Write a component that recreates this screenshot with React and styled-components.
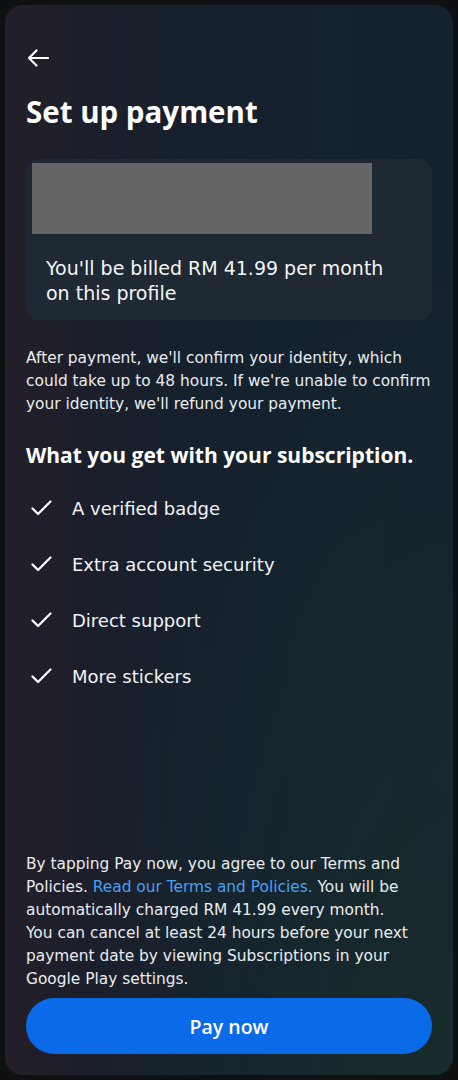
import styled, { createGlobalStyle } from "styled-components";

const GlobalStyle = createGlobalStyle`
  html, body {
    margin: 0;
    padding: 0;
    background-color: #0e1011;
  }
  * {
    box-sizing: border-box;
  }
`;

const Screen = styled.div`
  width: 458px;
  height: 1080px;
  padding: 5px;
  background-color: #0e1011;
  font-family: "DejaVu Sans", "Noto Sans", sans-serif;
  color: #f2f4f5;
`;

const Sheet = styled.div`
  height: 100%;
  border-radius: 18px;
  background:
    radial-gradient(ellipse at 100% 100%, rgba(24, 44, 44, 0.9) 0%, rgba(24, 44, 44, 0) 55%),
    linear-gradient(90deg, #241f28 0%, #1b1f2b 18%, #15212e 45%, #14222f 100%);
  display: flex;
  flex-direction: column;
  padding: 0 21px 21px;
`;

const BackButton = styled.button`
  align-self: flex-start;
  height: 18px;
  margin: 44px 0 0 1px;
  padding: 0;
  border: none;
  background: none;
  color: #fff;
  display: flex;
`;

const Title = styled.h1`
  margin: 28px 0 0;
  font-family: "Open Sans", sans-serif;
  font-size: 29.5px;
  line-height: 34px;
  font-weight: 700;
  color: #fff;
`;

const BillCard = styled.div`
  margin-top: 30px;
  border-radius: 13px;
  background-color: #1f2933;
  padding: 4px 6px 14px;
`;

const Redacted = styled.div`
  width: 340px;
  height: 71px;
  background-color: #656565;
`;

const BillText = styled.p`
  margin: 22px 0 0 14px;
  font-size: 19px;
  line-height: 25px;
  color: #f4f5f6;
`;

const Paragraph = styled.p`
  margin: ${(p) => p.$top || "27px"} 0 0;
  padding-right: ${(p) => p.$inset || "0"};
  font-size: 15.4px;
  line-height: 23px;
  color: #e9ecee;
`;

const Heading = styled.h2`
  margin: 25px 0 0;
  font-family: "Open Sans", sans-serif;
  font-size: 21px;
  line-height: 28px;
  font-weight: 700;
  color: #fff;
`;

const List = styled.ul`
  list-style: none;
  margin: 25px 0 0;
  padding: 0;
  display: flex;
  flex-direction: column;
  gap: 28px;
`;

const Item = styled.li`
  display: flex;
  align-items: center;
  height: 28px;
  font-size: 18px;
  color: #f2f4f5;
`;

const Check = styled.span`
  width: 46px;
  padding-left: 5px;
  display: flex;
`;

const Footer = styled.div`
  margin-top: auto;
`;

const Link = styled.span`
  color: #4a9ff5;
`;

const PayButton = styled.button`
  width: 100%;
  height: 56px;
  margin-top: 7px;
  border: none;
  border-radius: 28px;
  background-color: #0a6ae8;
  color: #fff;
  font-family: "Open Sans", sans-serif;
  font-size: 19.5px;
  font-weight: 600;
`;

const CheckIcon = () => (
  <svg width="21" height="16" viewBox="0 0 21 16" fill="none">
    <path d="M1.5 8.5 L7 14 L19.5 1.5" stroke="#fff" strokeWidth="2.2" strokeLinecap="round" strokeLinejoin="round" />
  </svg>
);

const benefits = [
  "A verified badge",
  "Extra account security",
  "Direct support",
  "More stickers",
];

export default function App() {
  return (
    <Screen>
      <GlobalStyle />
      <Sheet>
        <BackButton aria-label="Back">
          <svg width="22" height="18" viewBox="0 0 22 18" fill="none">
            <path d="M21 9 H2 M9.5 1.5 L2 9 L9.5 16.5" stroke="#fff" strokeWidth="2.2" strokeLinecap="round" strokeLinejoin="round" />
          </svg>
        </BackButton>
        <Title>Set up payment</Title>
        <BillCard>
          <Redacted />
          <BillText>
            You'll be billed RM 41.99 per month
            <br />
            on this profile
          </BillText>
        </BillCard>
        <Paragraph>
          After payment, we'll confirm your identity, which could take up to 48
          hours. If we're unable to confirm your identity, we'll refund your
          payment.
        </Paragraph>
        <Heading>What you get with your subscription.</Heading>
        <List>
          {benefits.map((b) => (
            <Item key={b}>
              <Check>
                <CheckIcon />
              </Check>
              {b}
            </Item>
          ))}
        </List>
        <Footer>
          <Paragraph $top="0" $inset="20px">
            By tapping Pay now, you agree to our Terms and Policies.{" "}
            <Link>Read our Terms and Policies.</Link> You will be automatically
            charged RM 41.99 every month. You can cancel at least 24 hours
            before your next payment date by viewing Subscriptions in your
            Google Play settings.
          </Paragraph>
          <PayButton>Pay now</PayButton>
        </Footer>
      </Sheet>
    </Screen>
  );
}
